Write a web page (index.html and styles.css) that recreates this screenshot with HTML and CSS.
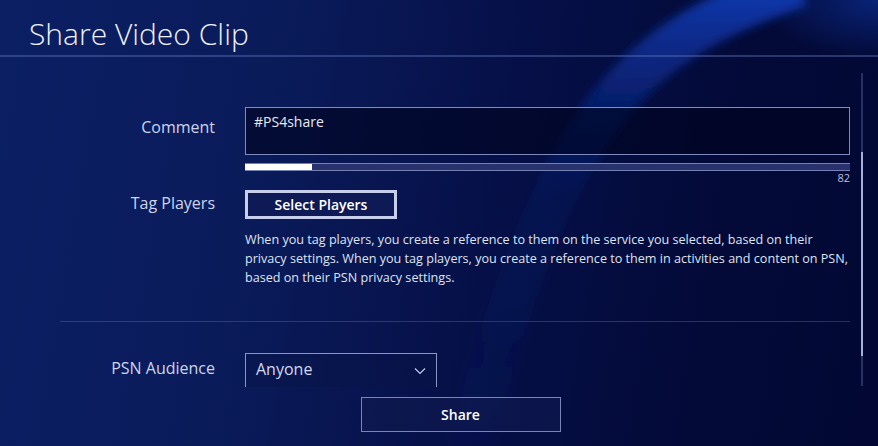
FILE: index.html
```html
<!DOCTYPE html>
<html lang="en">
<head>
  <meta charset="UTF-8">
  <title>Share Video Clip</title>
  <link rel="stylesheet" href="styles.css">
</head>
<body>
  <svg class="swoosh" width="878" height="446" viewBox="0 0 878 446" aria-hidden="true">
    <defs>
      <filter id="soft" x="-20%" y="-20%" width="140%" height="140%">
        <feGaussianBlur stdDeviation="5"/>
      </filter>
      <linearGradient id="fade" gradientUnits="userSpaceOnUse" x1="0" y1="0" x2="0" y2="446">
        <stop offset="0" stop-color="#0d35a6" stop-opacity="1"/>
        <stop offset="0.22" stop-color="#0b2c90" stop-opacity="0.55"/>
        <stop offset="0.45" stop-color="#0a2680" stop-opacity="0.18"/>
        <stop offset="1" stop-color="#0a2680" stop-opacity="0.08"/>
      </linearGradient>
      <radialGradient id="glow" cx="1" cy="0" r="1">
        <stop offset="0" stop-color="#0b2a88" stop-opacity="0.8"/>
        <stop offset="1" stop-color="#0b2a88" stop-opacity="0"/>
      </radialGradient>
    </defs>
    <rect x="760" y="0" width="118" height="60" fill="url(#glow)"/>
    <path d="M 800 -15 C 640 40, 560 100, 470 446" fill="none" stroke="url(#fade)" stroke-width="44" filter="url(#soft)"/>
  </svg>

  <div class="screen">
    <h1 class="title">Share Video Clip</h1>

    <div class="main">
      <div class="form">
        <div class="row row-comment">
          <div class="label">Comment</div>
          <div class="control">
            <div class="textbox">#PS4share</div>
            <div class="meter"><div class="meter-fill" style="width: 11%"></div></div>
            <div class="count">82</div>
          </div>
        </div>

        <div class="row row-tag">
          <div class="label">Tag Players</div>
          <div class="control">
            <button class="btn-select">Select Players</button>
            <p class="note">When you tag players, you create a reference to them on the service you selected, based on their privacy settings. When you tag players, you create a reference to them in activities and content on PSN, based on their PSN privacy settings.</p>
          </div>
        </div>

        <hr class="divider">

        <div class="row row-audience">
          <div class="label">PSN Audience</div>
          <div class="control">
            <div class="dropdown">
              <span>Anyone</span>
              <svg class="chevron" width="12" height="8" viewBox="0 0 12 8"><path d="M1 1.5 L6 6.5 L11 1.5" fill="none" stroke="#c9d0ec" stroke-width="1.1"/></svg>
            </div>
          </div>
        </div>
      </div>

      <div class="scrollbar"><div class="thumb"></div></div>
    </div>

    <div class="footer">
      <button class="btn-share">Share</button>
    </div>
  </div>
</body>
</html>
```

FILE: styles.css
```css
html, body {
  margin: 0;
  height: 100%;
}
body {
  width: 878px;
  height: 446px;
  overflow: hidden;
  position: relative;
  font-family: "Open Sans", "Noto Sans", sans-serif;
  color: #dfe4f4;
  background: linear-gradient(100deg, #0b1f63 0%, #0a1b5a 30%, #061048 55%, #030a38 80%, #020833 100%);
}
.swoosh {
  position: absolute;
  left: 0;
  top: 0;
  z-index: 0;
}
.screen {
  position: relative;
  z-index: 1;
  display: flex;
  flex-direction: column;
  height: 100%;
}
.title {
  margin: 0;
  height: 57px;
  box-sizing: border-box;
  padding: 13px 0 0 29px;
  font-size: 30px;
  font-weight: 300;
  color: #eef1fa;
  border-bottom: 2px solid rgba(90, 110, 180, 0.45);
}
.main {
  display: flex;
  height: 330px;
  overflow: hidden;
}
.form {
  width: 790px;
  padding-left: 60px;
  padding-top: 50px;
  flex-shrink: 0;
}
.row {
  display: grid;
  grid-template-columns: 155px 605px;
  column-gap: 30px;
}
.label {
  text-align: right;
  font-size: 16px;
  color: #cdd4ec;
}
.row-comment .label {
  padding-top: 9px;
}
.textbox {
  height: 48px;
  box-sizing: border-box;
  border: 1px solid #7f8bbf;
  background: rgba(0, 4, 30, 0.6);
  padding: 4px 8px;
  font-size: 14px;
  color: #e6eaf6;
}
.meter {
  margin-top: 8px;
  height: 8px;
  box-sizing: border-box;
  border-top: 1px solid #7580b4;
  border-bottom: 1px solid #7580b4;
  background: #28336e;
}
.meter-fill {
  height: 100%;
  background: #ffffff;
}
.count {
  text-align: right;
  font-size: 11px;
  line-height: 13px;
  color: #b9c0de;
}
.row-tag {
  margin-top: 6px;
}
.row-tag .label {
  padding-top: 2px;
}
.btn-select {
  display: block;
  width: 152px;
  height: 29px;
  padding: 0;
  border: 3px solid #c8cfec;
  background: #0e1a55;
  color: #ffffff;
  font-family: inherit;
  font-size: 14px;
  font-weight: 600;
}
.note {
  margin: 11px 0 0;
  font-size: 12.6px;
  line-height: 19px;
  color: #dfe3f2;
}
.divider {
  margin: 34px 0 0;
  border: none;
  border-top: 1px solid rgba(90, 110, 180, 0.4);
}
.row-audience {
  margin-top: 31px;
}
.row-audience .label {
  padding-top: 4px;
}
.dropdown {
  width: 192px;
  height: 40px;
  box-sizing: border-box;
  border: 1px solid #8a95c6;
  background: rgba(10, 20, 70, 0.35);
  display: flex;
  justify-content: space-between;
  align-items: flex-start;
  padding: 4px 10px 0 10px;
  font-size: 16px;
  color: #d3d9f0;
}
.chevron {
  margin-top: 9px;
}
.scrollbar {
  margin: 16px 0 0 11px;
  width: 2px;
  height: 313px;
  background: rgba(110, 125, 190, 0.35);
  position: relative;
}
.thumb {
  position: absolute;
  left: 0;
  top: 79px;
  width: 2px;
  height: 204px;
  background: #a9b0dc;
}
.footer {
  display: flex;
  justify-content: center;
  padding-left: 43px;
  padding-top: 10px;
}
.btn-share {
  width: 200px;
  height: 35px;
  border: 1px solid #7a84b6;
  background: rgba(16, 26, 80, 0.65);
  color: #ffffff;
  font-family: inherit;
  font-size: 14px;
  font-weight: 600;
}
```
